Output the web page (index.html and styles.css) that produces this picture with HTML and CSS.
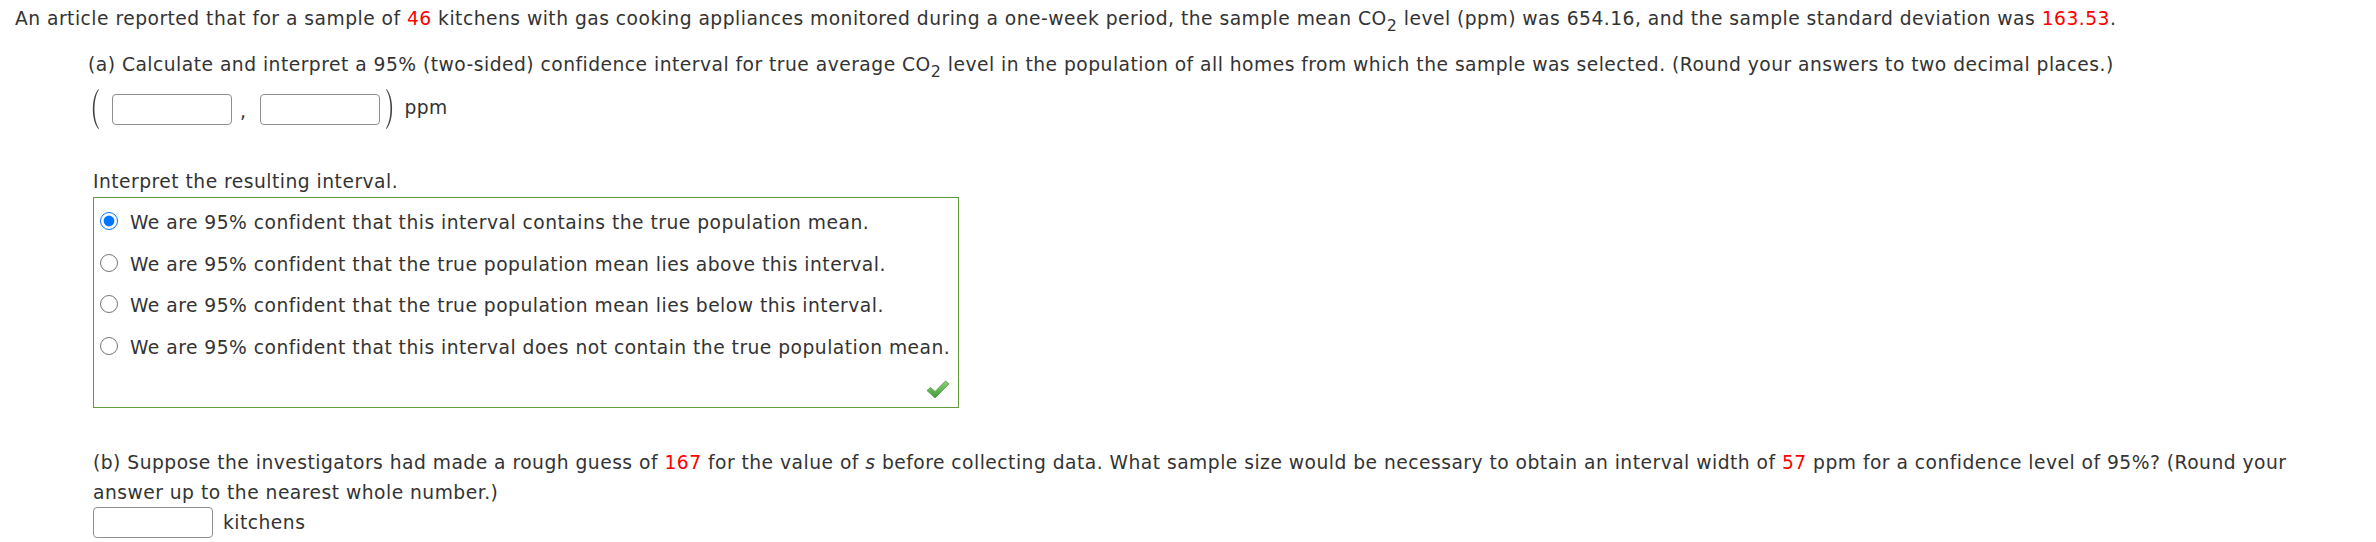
FILE: index.html
```html
<!DOCTYPE html>
<html lang="en">
<head>
<meta charset="utf-8">
<title>Confidence interval question</title>
<link rel="stylesheet" href="styles.css">
</head>
<body>
<div class="page">
  <p class="intro">An article reported that for a sample of <span class="red">46</span> kitchens with gas cooking appliances monitored during a one-week period, the sample mean CO<span class="sub">2</span> level (ppm) was 654.16, and the sample standard deviation was <span class="red">163.53</span>.</p>

  <div class="part-a">
    <p class="prompt">(a) Calculate and interpret a 95% (two-sided) confidence interval for true average CO<span class="sub">2</span> level in the population of all homes from which the sample was selected. (Round your answers to two decimal places.)</p>

    <div class="interval">
      <svg class="paren" width="12" height="42" viewBox="0 0 12 42" aria-hidden="true">
        <path d="M10.5 1 C3 9 3 33 10.5 41 L11 40.4 C5 32 5 10 11 1.6 Z" fill="#444"/>
      </svg>
      <input class="answer" type="text">
      <span class="comma">,</span>
      <input class="answer" type="text">
      <svg class="paren" width="12" height="42" viewBox="0 0 12 42" aria-hidden="true">
        <path d="M1.5 1 C9 9 9 33 1.5 41 L1 40.4 C7 32 7 10 1 1.6 Z" fill="#444"/>
      </svg>
      <span class="unit">ppm</span>
    </div>

    <p class="interp">Interpret the resulting interval.</p>

    <div class="choices">
      <label class="choice"><input type="radio" name="interp" checked><span>We are 95% confident that this interval contains the true population mean.</span></label>
      <label class="choice"><input type="radio" name="interp"><span>We are 95% confident that the true population mean lies above this interval.</span></label>
      <label class="choice"><input type="radio" name="interp"><span>We are 95% confident that the true population mean lies below this interval.</span></label>
      <label class="choice"><input type="radio" name="interp"><span>We are 95% confident that this interval does not contain the true population mean.</span></label>
      <div class="mark">
        <svg width="24" height="19" viewBox="0 0 24 19" aria-hidden="true">
          <defs>
            <linearGradient id="g" x1="0" y1="0" x2="0" y2="1">
              <stop offset="0" stop-color="#8fd27a"/>
              <stop offset="1" stop-color="#3f9a3a"/>
            </linearGradient>
          </defs>
          <path d="M1 10.5 L4.5 7.5 L9 11.5 L19.5 1 L23 4 L9 18 Z" fill="url(#g)" stroke="#4a9a3e" stroke-width="0.8" stroke-linejoin="round"/>
        </svg>
      </div>
    </div>
  </div>

  <div class="part-b">
    <p class="prompt">(b) Suppose the investigators had made a rough guess of <span class="red">167</span> for the value of <i>s</i> before collecting data. What sample size would be necessary to obtain an interval width of <span class="red">57</span> ppm for a confidence level of 95%? (Round your answer up to the nearest whole number.)</p>
    <div class="answer-row">
      <input class="answer" type="text">
      <span class="unit">kitchens</span>
    </div>
  </div>
</div>
</body>
</html>
```

FILE: styles.css
```css
html, body {
  margin: 0;
  padding: 0;
  background: #fff;
}

body {
  font-family: "DejaVu Sans", Verdana, sans-serif;
  font-size: 18.7px;
  letter-spacing: 0.48px;
  color: #333;
}

.page {
  padding: 4px 15px 0 15px;
}

p {
  margin: 0;
  line-height: 30px;
}

.red {
  color: #f00;
}

.sub {
  font-size: 85%;
  vertical-align: -0.4em;
  line-height: 0;
}

.intro {
  white-space: nowrap;
}

.part-a {
  margin-top: 16px;
  padding-left: 73px;
}

.interval {
  display: flex;
  align-items: center;
  height: 42px;
  margin-top: 8px;
}

.paren {
  display: block;
  flex: none;
}

.interval .answer:first-of-type {
  margin-left: 12px;
}

.answer {
  box-sizing: border-box;
  width: 120px;
  height: 31px;
  margin: 0;
  padding: 0 4px;
  border: 1px solid #8f8f8f;
  border-radius: 4px;
  background: #fff;
  font: inherit;
}

.comma {
  margin: 4px 14px 0 8px;
}

.interval .answer + .paren {
  margin-left: 5px;
}

.interval .unit {
  margin-left: 7px;
  margin-bottom: 4px;
}

.interp {
  margin-top: 36.5px;
  padding-left: 5px;
}

.choices {
  width: 866px;
  box-sizing: border-box;
  border: 1px solid #619d3c;
  padding: 3px 0 0 0;
  margin-left: 5px;
}

.choice {
  display: flex;
  align-items: center;
  height: 41.5px;
  padding-left: 6px;
}

.choice input {
  width: 18px;
  height: 18px;
  margin: 0 12px 0 0;
  flex: none;
}

.choice span {
  line-height: 41.5px;
  padding-top: 3px;
}

.mark {
  display: flex;
  justify-content: flex-end;
  height: 40px;
  padding-right: 8px;
}

.mark svg {
  margin-top: 13px;
}

.part-b {
  margin-top: 40.5px;
  padding-left: 78px;
  margin-right: 50px;
}

.answer-row {
  display: flex;
  align-items: center;
  gap: 10px;
  margin-top: -1px;
}
```
